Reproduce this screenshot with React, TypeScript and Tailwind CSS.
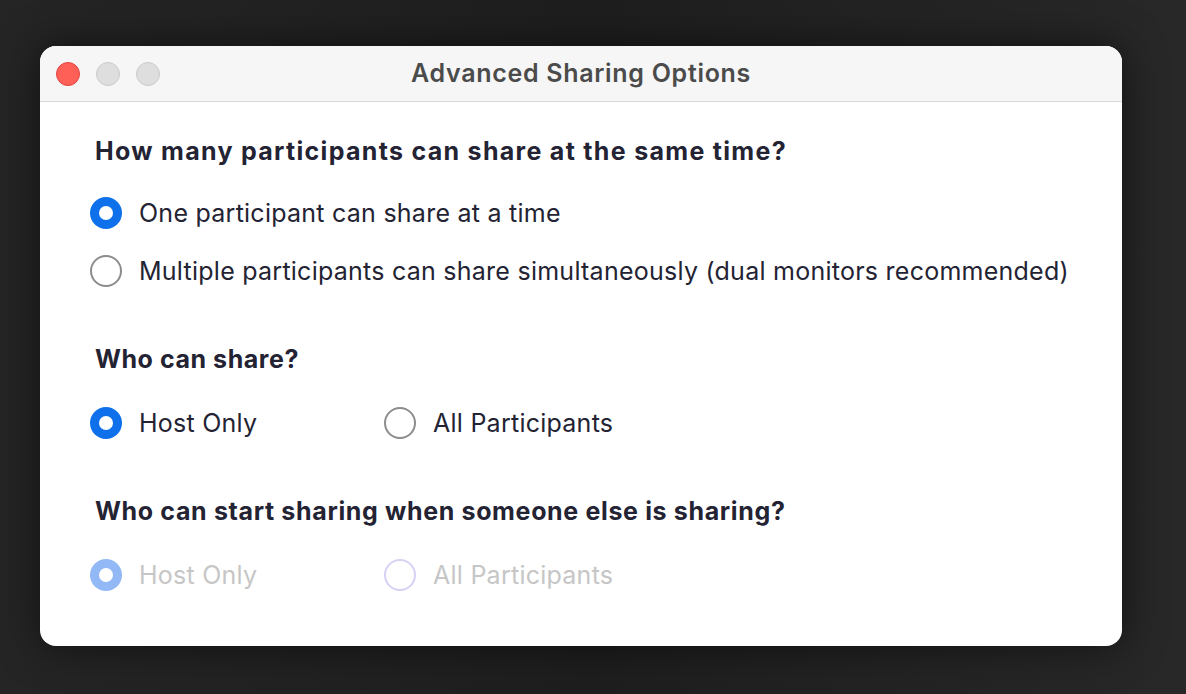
import React from "react";

const font = { fontFamily: 'Inter, "Noto Sans", "Liberation Sans", sans-serif' };

function Radio({ checked, disabled }: { checked: boolean; disabled?: boolean }) {
  if (checked) {
    return (
      <span
        className={`flex h-[32px] w-[32px] shrink-0 items-center justify-center rounded-full ${
          disabled ? "bg-[#93b8f6]" : "bg-[#0e71eb]"
        }`}
      >
        <span className="h-[14px] w-[14px] rounded-full bg-white" />
      </span>
    );
  }
  return (
    <span
      className={`h-[32px] w-[32px] shrink-0 rounded-full border-2 bg-white ${
        disabled ? "border-[#d6d1f5]" : "border-[#8c8c8c]"
      }`}
    />
  );
}

function Option({
  label,
  checked,
  disabled,
  className = "",
}: {
  label: string;
  checked: boolean;
  disabled?: boolean;
  className?: string;
}) {
  return (
    <div className={`flex h-[32px] items-center gap-[17px] ${className}`}>
      <Radio checked={checked} disabled={disabled} />
      <span
        className={`whitespace-nowrap text-[25px] leading-[30px] tracking-[0.25px] ${
          disabled ? "text-[#c6c6c6]" : "text-[#232333]"
        }`}
      >
        {label}
      </span>
    </div>
  );
}

function Heading({ children, className = "" }: { children: React.ReactNode; className?: string }) {
  return (
    <div
      className={`whitespace-nowrap pl-[5px] text-[25px] font-bold leading-[30px] text-[#232333] ${className}`}
    >
      {children}
    </div>
  );
}

export default function App() {
  return (
    <div
      className="flex h-[694px] w-[1186px] bg-gradient-to-r from-[#252525] via-[#1e1e1e] to-[#282828] pl-[40px] pt-[46px]"
      style={font}
    >
      <div className="flex h-[600px] w-[1082px] flex-col overflow-hidden rounded-[16px] bg-white shadow-[0_0_40px_rgba(0,0,0,0.55)]">
        <div className="relative flex h-[56px] shrink-0 items-center border-b border-[#dadada] bg-[#f6f6f6] pl-[16px]">
          <div className="flex items-center gap-[16px]">
            <span className="h-[24px] w-[24px] rounded-full border border-[#e0443e] bg-[#fe5f57]" />
            <span className="h-[24px] w-[24px] rounded-full border border-[#c9c9c9] bg-[#dedede]" />
            <span className="h-[24px] w-[24px] rounded-full border border-[#c9c9c9] bg-[#dedede]" />
          </div>
          <div className="absolute inset-0 flex items-center justify-center">
            <span className="text-[25px] font-semibold tracking-[0.7px] text-[#4b4b4b]">
              Advanced Sharing Options
            </span>
          </div>
        </div>
        <div className="flex flex-col pl-[50px] pt-[34px]">
          <Heading className="tracking-[1.3px]">How many participants can share at the same time?</Heading>
          <Option className="mt-[31px]" checked label="One participant can share at a time" />
          <Option
            className="mt-[26px]"
            checked={false}
            label="Multiple participants can share simultaneously (dual monitors recommended)"
          />
          <Heading className="mt-[57px] tracking-[0.55px]">Who can share?</Heading>
          <div className="mt-[33px] flex">
            <Option className="w-[294px]" checked label="Host Only" />
            <Option checked={false} label="All Participants" />
          </div>
          <Heading className="mt-[57px] tracking-[0.65px]">
            Who can start sharing when someone else is sharing?
          </Heading>
          <div className="mt-[33px] flex">
            <Option className="w-[294px]" checked disabled label="Host Only" />
            <Option checked={false} disabled label="All Participants" />
          </div>
        </div>
      </div>
    </div>
  );
}
